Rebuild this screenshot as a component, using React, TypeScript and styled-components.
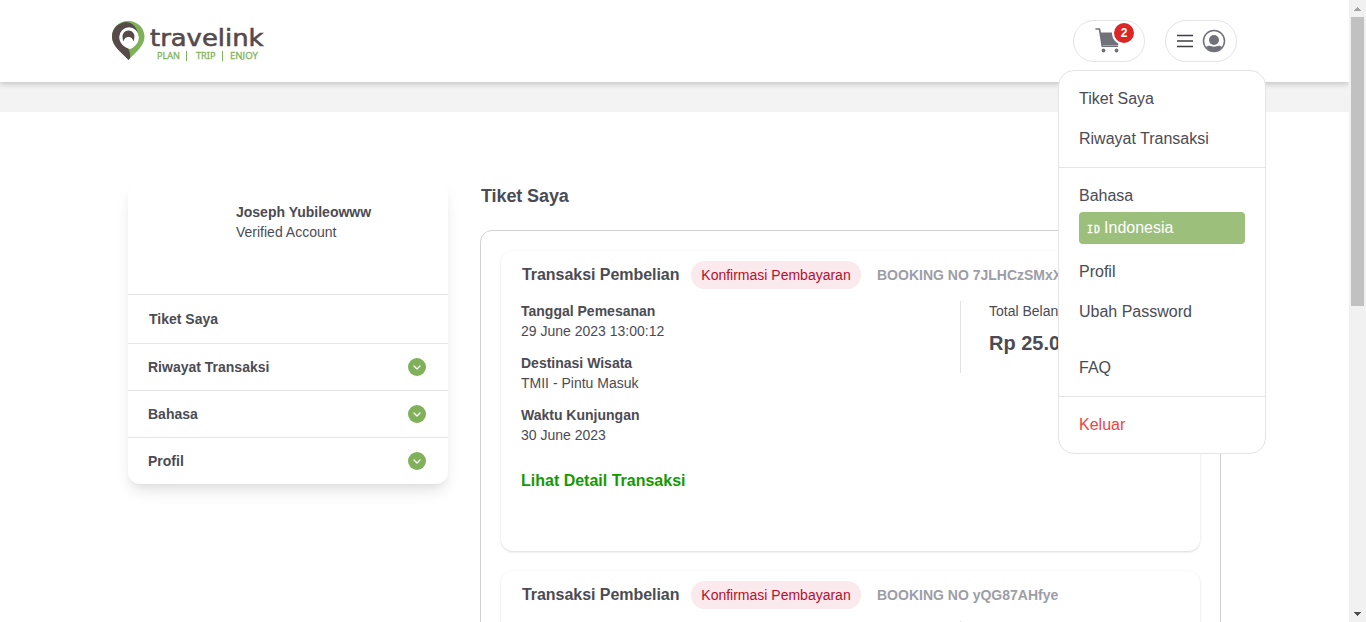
import React from "react";
import styled, { createGlobalStyle, css } from "styled-components";

const GlobalStyle = createGlobalStyle`
  * { box-sizing: border-box; }
  body {
    margin: 0;
    overflow: hidden;
    background: #fff;
    font-family: "Liberation Sans", Arial, sans-serif;
    color: #4b4b54;
  }
  h1, h2, p { margin: 0; }
`;

const Window = styled.div`
  display: flex;
  width: 100%;
  height: 622px;
  overflow: hidden;
`;

const Page = styled.div`
  position: relative;
  flex: 1;
  min-width: 0;
  height: 622px;
  overflow: hidden;
`;

const Header = styled.header`
  position: relative;
  display: flex;
  align-items: center;
  justify-content: space-between;
  height: 82px;
  padding: 0 112px 0 108px;
  background: #fff;
  box-shadow: 0 2px 6px rgba(0, 0, 0, 0.2);
`;

const Strip = styled.div`
  height: 30px;
  background: #f3f3f3;
`;

const Actions = styled.div`
  display: flex;
  gap: 20px;
`;

const Pill = styled.button<{ $gap?: number; $shift?: number }>`
  position: relative;
  display: flex;
  align-items: center;
  justify-content: center;
  gap: ${(p) => p.$gap ?? 0}px;
  width: 72px;
  height: 42px;
  padding: 0 ${(p) => p.$shift ?? 0}px ${(p) => p.$shift ?? 0}px 0;
  border: 1px solid #e4e4e7;
  border-radius: 21px;
  background: #fff;
`;

const CartBadge = styled.span`
  position: absolute;
  top: 2px;
  left: 40px;
  width: 20px;
  height: 20px;
  border-radius: 50%;
  background: #dc2626;
  box-shadow: 0 0 0 2px #fff;
  color: #fff;
  font: bold 12px/20px "Liberation Sans", Arial, sans-serif;
  text-align: center;
`;

const Content = styled.main`
  display: flex;
  align-items: flex-start;
  gap: 32px;
  padding: 68px 128px 0;
`;

const Sidebar = styled.aside`
  width: 320px;
  flex: none;
  border-radius: 12px;
  background: #fff;
  box-shadow: 0 10px 15px -3px rgba(0, 0, 0, 0.1), 0 4px 6px -2px rgba(0, 0, 0, 0.05);
`;

const Profile = styled.div`
  height: 114px;
  padding: 22px 0 0 108px;
  font-size: 14px;
  line-height: 20px;
`;

const Strong = styled.p`
  font-weight: bold;
`;

const SideRow = styled.div<{ $height: number; $indent: number }>`
  display: flex;
  align-items: center;
  justify-content: space-between;
  height: ${(p) => p.$height}px;
  padding: 0 22px 0 ${(p) => p.$indent}px;
  border-top: 1px solid #e5e5e5;
  font-size: 14px;
  font-weight: bold;
`;

const Tickets = styled.section`
  width: 741px;
  flex: none;
`;

const Title = styled.h1`
  padding-left: 1px;
  font-size: 18px;
  line-height: 28px;
  margin-top: 2px;
  letter-spacing: -0.1px;
`;

const TicketList = styled.div`
  display: flex;
  flex-direction: column;
  gap: 20px;
  height: 760px;
  margin-top: 20px;
  padding: 20px;
  border: 1px solid #d1d1d4;
  border-radius: 12px;
`;

const Card = styled.article`
  height: 300px;
  flex: none;
  padding: 10px 20px;
  border-radius: 12px;
  background: #fff;
  box-shadow: 0 1px 3px rgba(0, 0, 0, 0.1), 0 1px 2px rgba(0, 0, 0, 0.06);
`;

const CardHead = styled.div`
  display: flex;
  align-items: center;
  height: 28px;
  padding-left: 1px;
  white-space: nowrap;
`;

const CardTitle = styled.h2`
  width: 169px;
  font-size: 16px;
  letter-spacing: -0.05px;
`;

const Status = styled.span`
  width: 170px;
  height: 28px;
  border-radius: 14px;
  background: #fae9ed;
  color: #b80d2e;
  font-size: 14px;
  line-height: 28px;
  text-align: center;
`;

const Booking = styled.span`
  margin-left: 16px;
  color: #9d9da6;
  font-size: 14px;
  font-weight: bold;
`;

const CardBody = styled.div`
  display: flex;
  align-items: flex-start;
  padding-top: 12px;
`;

const Details = styled.div`
  width: 439px;
`;

const Field = styled.div`
  margin-bottom: 12px;
  font-size: 14px;
  line-height: 20px;
`;

const Total = styled.div`
  height: 72px;
  padding-left: 28px;
  border-left: 1px solid #e2e2e4;
  font-size: 14px;
  line-height: 20px;
`;

const Price = styled.p`
  margin-top: 8px;
  font-size: 20px;
  font-weight: bold;
  line-height: 28px;
`;

const DetailLink = styled.a`
  display: block;
  margin-top: 24px;
  color: #149a00;
  font-size: 16px;
  font-weight: bold;
  line-height: 24px;
`;

const Menu = styled.nav`
  position: absolute;
  top: 70px;
  left: 1058px;
  width: 208px;
  height: 384px;
  border: 1px solid #e4e4e7;
  border-radius: 16px;
  background: #fff;
  font-size: 16px;
`;

const MenuGroup = styled.div<{ $top: number; $bottom: number }>`
  padding: ${(p) => p.$top}px 20px ${(p) => p.$bottom}px;
  & + & { border-top: 1px solid #e4e4e7; }
`;

const MenuItem = styled.div<{ $height?: number; $danger?: boolean }>`
  height: ${(p) => p.$height ?? 40}px;
  line-height: ${(p) => p.$height ?? 40}px;
  ${(p) => p.$danger && css`color: #ef4444;`}
`;

const FaqItem = styled(MenuItem)`
  margin-top: 16px;
`;

const Language = styled.div`
  height: 32px;
  margin-bottom: 8px;
  padding-left: 8px;
  border-radius: 4px;
  background: #9cbf7c;
  color: #fff;
  line-height: 31px;
`;

const CountryCode = styled.span`
  margin-right: 3px;
  font-family: "DejaVu Sans Mono", monospace;
  font-size: 10px;
  letter-spacing: 1px;
  -webkit-text-stroke: 0.3px #fff;
`;

const Scrollbar = styled.div`
  display: flex;
  flex-direction: column;
  align-items: center;
  width: 17px;
  height: 622px;
  background: #f1f1f1;
`;

const ScrollThumb = styled.div`
  width: 13px;
  height: 289px;
  background: #c1c1c1;
  margin-bottom: auto;
`;

const ArrowSvg = styled.svg`
  flex: none;
`;

const Logo = () => (
  <svg width="164" height="50" viewBox="0 0 164 50" aria-label="travelink">
    <path d="M20 5C10.500 5 4 12 4 20.500C4 30 13 36 20.500 44C28 36 36.500 30 36.500 20.500C36.500 12 29.500 5 20 5Z" fill="#7fb158" />
    <path d="M18 6C9.500 7 4 13 4 20.500C4 30 13 36 20.500 44L22 42C22.500 38 21.500 34.500 20 32.500L30 20C30 12 25 6.500 18 6Z" fill="#564a4b" />
    <path d="M21 11.300A9.800 9.800 0 0 1 30.800 21C30.800 26.500 27.500 31 22 33C15.500 31.500 11.200 26.500 11.200 21A9.800 9.800 0 0 1 21 11.300Z" fill="#fff" />
    <path d="M15.500 25.500C12.800 18.500 16 14.500 20.500 14.500S28.200 18.500 25.500 25.500C24.800 22.300 23 21 20.500 21S16.200 22.300 15.500 25.500Z" fill="#564a4b" />
    <text x="42" y="29.500" textLength="113.500" lengthAdjust="spacingAndGlyphs" fontFamily="DejaVu Sans, sans-serif" fontSize="23.500" fill="#564a4b" stroke="#564a4b" strokeWidth=".6">travelink</text>
    <g fontFamily="Noto Sans, sans-serif" fontSize="9.500" fill="#82b35d" stroke="#82b35d" strokeWidth=".3">
      <text x="49" y="42.700" textLength="23" lengthAdjust="spacingAndGlyphs">PLAN</text>
      <text x="88" y="42.700" textLength="19.500" lengthAdjust="spacingAndGlyphs">TRIP</text>
      <text x="122" y="42.700" textLength="28" lengthAdjust="spacingAndGlyphs">ENJOY</text>
    </g>
    <path d="M78.500 35V45M114.500 35V45" stroke="#82b35d" />
  </svg>
);

const CartIcon = () => (
  <svg width="26" height="26" viewBox="0 0 26 26">
    <path d="M1 2H4.500L7.300 19.300H22.500" fill="none" stroke="#71717a" strokeWidth="1.600" strokeLinecap="round" strokeLinejoin="round" />
    <path d="M5 5.500H25L23.500 17Q23.300 18.300 22 18.300H7Z" fill="#71717a" />
    <circle cx="8.500" cy="23.500" r="1.900" fill="#71717a" />
    <circle cx="21.500" cy="23.500" r="1.900" fill="#71717a" />
  </svg>
);

const MenuIcon = () => (
  <svg width="18" height="14" viewBox="0 0 18 14">
    <path d="M1 1.500H17M1 7H17M1 12.500H17" stroke="#3f3f46" strokeWidth="1.400" />
  </svg>
);

const UserIcon = () => (
  <svg width="24" height="24" viewBox="0 0 24 24">
    <circle cx="12" cy="12" r="10.500" fill="none" stroke="#71717a" strokeWidth="1.500" />
    <circle cx="12" cy="11" r="5" fill="#71717a" />
    <path d="M4 18C6.500 16 8 16.800 9.500 17.300Q12 18.200 14.500 17.300C16 16.800 17.500 16 20 18Q17 22.500 12 22.500T4 18Z" fill="#71717a" />
  </svg>
);

const ChevronBadge = () => (
  <svg width="18" height="18" viewBox="0 0 18 18">
    <circle cx="9" cy="9" r="9" fill="#80b05a" />
    <path d="M6 8L9 11L12 8" fill="none" stroke="#fff" strokeWidth="1.300" strokeLinecap="round" strokeLinejoin="round" />
  </svg>
);

const ScrollArrow = ({ down = false }: { down?: boolean }) => (
  <ArrowSvg width="17" height="17" viewBox="0 0 17 17" shapeRendering="crispEdges">
    <path d={down ? "M5 7H12L8.500 11Z" : "M5 11H12L8.500 7Z"} fill={down ? "#505050" : "#a3a3a3"} />
  </ArrowSvg>
);

const Ticket = ({ booking }: { booking: string }) => (
  <Card>
    <CardHead>
      <CardTitle>Transaksi Pembelian</CardTitle>
      <Status>Konfirmasi Pembayaran</Status>
      <Booking>BOOKING NO {booking}</Booking>
    </CardHead>
    <CardBody>
      <Details>
        <Field><Strong>Tanggal Pemesanan</Strong><p>29 June 2023 13:00:12</p></Field>
        <Field><Strong>Destinasi Wisata</Strong><p>TMII - Pintu Masuk</p></Field>
        <Field><Strong>Waktu Kunjungan</Strong><p>30 June 2023</p></Field>
        <DetailLink>Lihat Detail Transaksi</DetailLink>
      </Details>
      <Total><p>Total Belanja</p><Price>Rp 25.000</Price></Total>
    </CardBody>
  </Card>
);

export default function App() {
  return (
    <Window>
      <GlobalStyle />
      <Page>
        <Header>
          <Logo />
          <Actions>
            <Pill aria-label="Keranjang" $shift={2}><CartIcon /><CartBadge>2</CartBadge></Pill>
            <Pill aria-label="Akun" $gap={8}><MenuIcon /><UserIcon /></Pill>
          </Actions>
        </Header>
        <Strip />
        <Content>
          <Sidebar>
            <Profile><Strong>Joseph Yubileowww</Strong><p>Verified Account</p></Profile>
            <SideRow $height={49} $indent={21}>Tiket Saya</SideRow>
            {["Riwayat Transaksi", "Bahasa", "Profil"].map((label) => (
              <SideRow key={label} $height={47} $indent={20}>{label}<ChevronBadge /></SideRow>
            ))}
          </Sidebar>
          <Tickets>
            <Title>Tiket Saya</Title>
            <TicketList>
              <Ticket booking="7JLHCzSMxX" />
              <Ticket booking="yQG87AHfye" />
            </TicketList>
          </Tickets>
        </Content>
        <Menu>
          <MenuGroup $top={8} $bottom={8}>
            <MenuItem>Tiket Saya</MenuItem>
            <MenuItem>Riwayat Transaksi</MenuItem>
          </MenuGroup>
          <MenuGroup $top={12} $bottom={8}>
            <MenuItem $height={32}>Bahasa</MenuItem>
            <Language><CountryCode>ID</CountryCode>Indonesia</Language>
            <MenuItem>Profil</MenuItem>
            <MenuItem>Ubah Password</MenuItem>
            <FaqItem>FAQ</FaqItem>
          </MenuGroup>
          <MenuGroup $top={8} $bottom={8}>
            <MenuItem $danger>Keluar</MenuItem>
          </MenuGroup>
        </Menu>
      </Page>
      <Scrollbar>
        <ScrollArrow />
        <ScrollThumb />
        <ScrollArrow down />
      </Scrollbar>
    </Window>
  );
}
